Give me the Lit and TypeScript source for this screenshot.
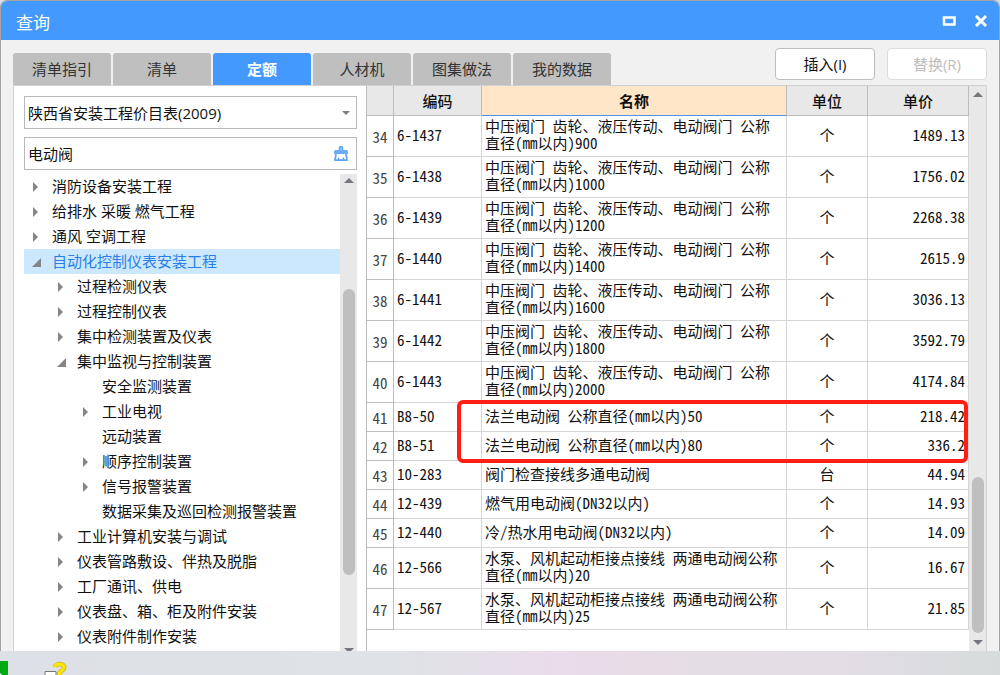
import { LitElement, html, css, svg } from "lit";
import { customElement, property, state } from "lit/decorators.js";
import { classMap } from "lit/directives/class-map.js";

type Arrow = "open" | "closed" | "none";
interface TreeNode { level: number; arrow: Arrow; label: string; }
interface Row { no: number; code: string; name: string; unit: string; price: string; }

const TREE: TreeNode[] = [
  { level: 0, arrow: "closed", label: "消防设备安装工程" },
  { level: 0, arrow: "closed", label: "给排水 采暖 燃气工程" },
  { level: 0, arrow: "closed", label: "通风 空调工程" },
  { level: 0, arrow: "open", label: "自动化控制仪表安装工程" },
  { level: 1, arrow: "closed", label: "过程检测仪表" },
  { level: 1, arrow: "closed", label: "过程控制仪表" },
  { level: 1, arrow: "closed", label: "集中检测装置及仪表" },
  { level: 1, arrow: "open", label: "集中监视与控制装置" },
  { level: 2, arrow: "none", label: "安全监测装置" },
  { level: 2, arrow: "closed", label: "工业电视" },
  { level: 2, arrow: "none", label: "远动装置" },
  { level: 2, arrow: "closed", label: "顺序控制装置" },
  { level: 2, arrow: "closed", label: "信号报警装置" },
  { level: 2, arrow: "none", label: "数据采集及巡回检测报警装置" },
  { level: 1, arrow: "closed", label: "工业计算机安装与调试" },
  { level: 1, arrow: "closed", label: "仪表管路敷设、伴热及脱脂" },
  { level: 1, arrow: "closed", label: "工厂通讯、供电" },
  { level: 1, arrow: "closed", label: "仪表盘、箱、柜及附件安装" },
  { level: 1, arrow: "closed", label: "仪表附件制作安装" },
];

const valve = (size: number) => `中压阀门 齿轮、液压传动、电动阀门 公称直径(mm以内)${size}`;
const pump = (size: number) => `水泵、风机起动柜接点接线 两通电动阀公称直径(mm以内)${size}`;

const ROWS: Row[] = [
  { no: 34, code: "6-1437", name: valve(900), unit: "个", price: "1489.13" },
  { no: 35, code: "6-1438", name: valve(1000), unit: "个", price: "1756.02" },
  { no: 36, code: "6-1439", name: valve(1200), unit: "个", price: "2268.38" },
  { no: 37, code: "6-1440", name: valve(1400), unit: "个", price: "2615.9" },
  { no: 38, code: "6-1441", name: valve(1600), unit: "个", price: "3036.13" },
  { no: 39, code: "6-1442", name: valve(1800), unit: "个", price: "3592.79" },
  { no: 40, code: "6-1443", name: valve(2000), unit: "个", price: "4174.84" },
  { no: 41, code: "B8-50", name: "法兰电动阀 公称直径(mm以内)50", unit: "个", price: "218.42" },
  { no: 42, code: "B8-51", name: "法兰电动阀 公称直径(mm以内)80", unit: "个", price: "336.2" },
  { no: 43, code: "10-283", name: "阀门检查接线多通电动阀", unit: "台", price: "44.94" },
  { no: 44, code: "12-439", name: "燃气用电动阀(DN32以内)", unit: "个", price: "14.93" },
  { no: 45, code: "12-440", name: "冷/热水用电动阀(DN32以内)", unit: "个", price: "14.09" },
  { no: 46, code: "12-566", name: pump(20), unit: "个", price: "16.67" },
  { no: 47, code: "12-567", name: pump(25), unit: "个", price: "21.85" },
];

@customElement("scroll-rail")
class ScrollRail extends LitElement {
  @property({ type: Number }) before = 0;
  @property({ type: Number }) size = 0;
  @property({ type: Number }) after = 0;

  static styles = css`
    :host { display: flex; flex-direction: column; align-items: center; width: 17px; background: #e8e8e8; overflow: hidden; }
    svg { display: block; flex: none; width: 10px; height: 5px; margin: 4px 0; fill: #76767e; }
    .track { flex: 1; align-self: stretch; display: flex; flex-direction: column; align-items: center; min-height: 0; }
    .thumb { width: 12px; border-radius: 6px; background: #bfbfbf; }
  `;

  render() {
    return html`
      <svg viewBox="0 0 10 5"><path d="M0 5 5 0l5 5z" /></svg>
      <div class="track">
        <div style="flex:${this.before}"></div>
        <div class="thumb" style="flex:${this.size}"></div>
        <div style="flex:${this.after}"></div>
      </div>
      <svg viewBox="0 0 10 5"><path d="M0 0h10L5 5z" /></svg>
    `;
  }
}

@customElement("catalog-tree")
class CatalogTree extends LitElement {
  @state() private selected = 3;

  static styles = css`
    :host { display: block; min-height: 0; overflow: hidden; }
    ul { margin: 0; padding: 0; list-style: none; }
    .node {
      display: flex; align-items: center; box-sizing: border-box; width: 100%; height: 25px; padding: 0 0 0 6px;
      border: 0; background: none; color: #111; font: inherit; line-height: 25px; text-align: left; white-space: nowrap;
    }
    .level-1 { padding-left: 31px; }
    .level-2 { padding-left: 56px; }
    .selected { background: #cce8ff; color: #2a7fe6; }
    .arrow { flex: none; width: 12px; height: 12px; margin-right: 10px; fill: #858585; }
  `;

  private arrow(kind: Arrow) {
    const shape = kind === "closed" ? svg`<path d="M3 1l5 5-5 5z" />` : kind === "open" ? svg`<path d="M11 2v9H2z" />` : null;
    return html`<svg class="arrow" viewBox="0 0 12 12">${shape}</svg>`;
  }

  render() {
    return html`<ul>
      ${TREE.map((n, i) => html`<li>
        <button class=${classMap({ node: true, [`level-${n.level}`]: true, selected: i === this.selected })}
          @click=${() => (this.selected = i)}>${this.arrow(n.arrow)}${n.label}</button>
      </li>`)}
    </ul>`;
  }
}

@customElement("quota-table")
class QuotaTable extends LitElement {
  static styles = css`
    :host { display: block; position: relative; min-width: 0; overflow: hidden; font-family: "Noto Sans CJK SC", sans-serif; font-feature-settings: "hwid"; }
    table { width: 100%; table-layout: fixed; border-collapse: separate; border-spacing: 0; font-size: 15px; line-height: 17px; color: #111; }
    th, td { box-sizing: border-box; padding: 1px 3px 5px; border: solid #d6d6d6; border-width: 0 1px 1px 0; font-weight: 400; overflow-wrap: anywhere; }
    td { height: 29px; text-align: left; }
    thead th { height: 30px; padding: 3px; background: #e8e8e8; border-color: #bdbdbd; font-weight: 500; text-align: center; }
    thead .active { background: #ffe6c8; border-bottom-color: #4a94e8; font-weight: 700; }
    tbody .no { padding: 3px 0; border-color: #bdbdbd; color: #444; text-align: center; }
    td.unit { text-align: center; }
    td.price { text-align: right; }
    .c-no { width: 27px; }
    .c-code { width: 88px; }
    .c-unit { width: 81px; }
    .c-price { width: 101px; }
    .mark { position: absolute; top: 314px; right: 1px; left: 90px; box-sizing: border-box; height: 63px; border: 4px solid #ff1f14; border-radius: 6px; pointer-events: none; }
  `;

  render() {
    return html`
      <table>
        <colgroup><col class="c-no" /><col class="c-code" /><col /><col class="c-unit" /><col class="c-price" /></colgroup>
        <thead><tr><th></th><th>编码</th><th class="active">名称</th><th>单位</th><th>单价</th></tr></thead>
        <tbody>
          ${ROWS.map((r) => html`<tr>
            <th class="no" scope="row">${r.no}</th><td>${r.code}</td><td>${r.name}</td>
            <td class="unit">${r.unit}</td><td class="price">${r.price}</td>
          </tr>`)}
        </tbody>
      </table>
      <div class="mark"></div>
    `;
  }
}

@customElement("app-root")
class AppRoot extends LitElement {
  @state() private tab = 2;
  private tabs = ["清单指引", "清单", "定额", "人材机", "图集做法", "我的数据"];

  static styles = css`
    :host {
      display: flex; flex-direction: column; height: 100vh; overflow: hidden; color: #111;
      background: linear-gradient(90deg, #dde0e6 0%, #dfe2e7 40%, #eadcea 56%, #e5dde4 70%, #e3dde6 84%, #d6dcdb 100%);
      font-family: "Open Sans", "Noto Sans CJK SC", sans-serif; font-size: 15px; line-height: 20px;
    }
    .window {
      flex: 1; min-height: 0; display: flex; flex-direction: column; overflow: hidden;
      border: solid #a3a3a3; border-width: 1px 1px 0; border-radius: 7px 7px 0 0; background: #f1f1f1;
    }
    .titlebar { flex: none; display: flex; align-items: center; height: 39px; padding: 0 11px 0 15px; background: #4499ff; color: #fff; }
    h1 { flex: 1; margin: 0; padding-top: 4px; font-size: 17px; font-weight: 400; line-height: 24px; }
    .caption { display: flex; align-items: center; padding: 0; border: 0; background: none; margin-left: 18px; }
    .caption svg { display: block; width: 14px; height: 12px; fill: none; stroke: #fff; stroke-width: 3; }
    .toolbar { flex: none; display: flex; align-items: flex-end; gap: 12px; height: 45px; padding: 0 12px; }
    .tabs { flex: 1; display: flex; gap: 2px; }
    .tab {
      width: 98px; height: 32px; padding: 0; border: 0; border-radius: 3px 3px 0 0;
      background: #bfbfbf; color: #333; font: inherit; line-height: 32px;
    }
    .tab.active { background: #4499ff; color: #fff; font-weight: 700; }
    .action {
      box-sizing: border-box; width: 100px; height: 32px; margin-bottom: 5px; padding: 0;
      border: 1px solid #bdbdbd; border-radius: 4px; background: #fff; color: #111; font: inherit;
    }
    .action:disabled { border-color: #dcdcdc; color: #bdbdbd; }
    .panel { flex: 1; min-height: 0; display: flex; margin: 0 12px; border: solid #d0d0d0; border-width: 1px 1px 0; background: #fff; }
    .side { flex: none; display: flex; flex-direction: column; width: 333px; padding: 10px 9px 0 10px; }
    .field { position: relative; flex: none; box-sizing: border-box; height: 33px; border: 1px solid #b8b8b8; display: flex; align-items: center; background: #fff; }
    .search { margin: 8px 0 4px; }
    .field select, .field input {
      appearance: none; box-sizing: border-box; flex: 1; min-width: 0; height: 100%; margin: 0; padding: 0 3px;
      border: 0; outline: 0; background: none; color: #111; font: inherit;
    }
    .caret { position: absolute; right: 6px; width: 8px; height: 4px; fill: #808080; pointer-events: none; }
    .clear { padding: 0; margin-right: 7px; border: 0; background: none; }
    .clear svg { display: block; width: 16px; height: 16px; }
    .list { flex: 1; min-height: 0; display: flex; }
    catalog-tree { flex: 1; }
    .list scroll-rail { margin-bottom: -6px; }
    .grid { flex: 1; min-width: 0; display: flex; border-left: 1px solid #bdbdbd; }
    quota-table { flex: 1; }
    .grid scroll-rail { box-sizing: border-box; padding: 2px 0; }
    .desktop { position: relative; z-index: 1; flex: none; height: 24px; overflow: hidden; }
    .desktop svg { display: block; width: 80px; height: 24px; }
  `;

  render() {
    return html`
      <main class="window">
        <header class="titlebar">
          <h1>查询</h1>
          <button class="caption" aria-label="最大化"><svg viewBox="0 0 14 12"><path d="M2 2.5h10.500v7H2z" stroke-width="2.500" /></svg></button>
          <button class="caption" aria-label="关闭"><svg viewBox="0 0 14 12"><path d="M2 1l10 10M12 1L2 11" /></svg></button>
        </header>
        <div class="toolbar">
          <nav class="tabs">
            ${this.tabs.map((t, i) => html`<button class=${classMap({ tab: true, active: i === this.tab })} @click=${() => (this.tab = i)}>${t}</button>`)}
          </nav>
          <button class="action">插入(I)</button>
          <button class="action" disabled>替换(R)</button>
        </div>
        <section class="panel">
          <div class="side">
            <div class="field">
              <select aria-label="定额库"><option>陕西省安装工程价目表(2009)</option></select>
              <svg class="caret" viewBox="0 0 8 4"><path d="M0 0h8L4 4z" /></svg>
            </div>
            <div class="field search">
              <input type="text" aria-label="搜索" .value=${"电动阀"} />
              <button class="clear" aria-label="清除">
                <svg viewBox="0 0 16 16" fill="none" stroke="#5aa2f8">
                  <path d="M6.500 4.500V2a1.500 1.500 0 0 1 3 0v2.500" fill="#a9cffc" stroke-width="1.500" />
                  <path d="M2.500 4h11a1.500 1.500 0 0 1 1.500 1.500V8H1V5.500A1.500 1.500 0 0 1 2.500 4z" fill="#6badf9" stroke="none" />
                  <path d="M3 8 2 14.200h12L13 8" stroke-width="1.700" stroke-linejoin="round" />
                  <path d="M5.500 14v-2.500M10.500 14v-2.500" stroke-width="1.300" />
                </svg>
              </button>
            </div>
            <div class="list">
              <catalog-tree></catalog-tree>
              <scroll-rail .before=${102} .size=${286} .after=${69}></scroll-rail>
            </div>
          </div>
          <div class="grid">
            <quota-table></quota-table>
            <scroll-rail .before=${377} .size=${157} .after=${3}></scroll-rail>
          </div>
        </section>
      </main>
      <footer class="desktop">
        <svg viewBox="0 0 80 24">
          <path d="M0 10h8v14H0z" fill="#00aa14" />
          <path d="M0 22l2 2H0z" fill="#fff" />
          <path d="M45 24v-3.500h11V24" fill="#fff" stroke="#777" />
          <path d="M55 16c1-4 10-4 9 1-1 3-5 3-5 7" fill="none" stroke="#b39b10" stroke-width="4.500" />
          <path d="M55 16c1-4 10-4 9 1-1 3-5 3-5 7" fill="none" stroke="#ffe600" stroke-width="3.500" />
        </svg>
      </footer>
    `;
  }
}
